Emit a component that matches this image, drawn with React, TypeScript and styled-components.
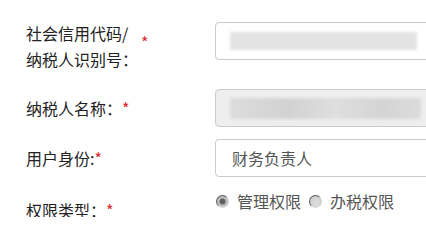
import React from 'react';
import styled, { createGlobalStyle } from 'styled-components';

const GlobalStyle = createGlobalStyle`
  html, body {
    margin: 0;
    padding: 0;
    background: #fff;
    overflow: hidden;
  }
  body {
    font-family: "Noto Sans CJK SC", "Noto Sans", sans-serif;
    font-size: 16px;
  }
`;

const Form = styled.div`
  display: flex;
  flex-direction: column;
  box-sizing: border-box;
  width: 426px;
  height: 217px;
  overflow: hidden;
  padding: 20px 0 0 26px;
`;

const Row = styled.div<{ $height: number; $gap: number; $align?: string }>`
  display: flex;
  align-items: ${(p) => p.$align ?? 'center'};
  flex-shrink: 0;
  height: ${(p) => p.$height}px;
  margin-bottom: ${(p) => p.$gap}px;
`;

const Label = styled.div<{ $offset?: number }>`
  display: flex;
  align-items: flex-start;
  width: 189px;
  flex-shrink: 0;
  margin-top: ${(p) => p.$offset ?? 0}px;
  color: #222;
  line-height: 26px;
`;

const LabelText = styled.span<{ $width?: number }>`
  display: block;
  width: ${(p) => (p.$width ? `${p.$width}px` : 'auto')};
`;

const Star = styled.span<{ $drop?: number }>`
  color: #e3262b;
  margin-top: ${(p) => p.$drop ?? 0}px;
`;

const Field = styled.div<{ $disabled?: boolean; $offset?: number }>`
  display: flex;
  align-items: center;
  flex-shrink: 0;
  box-sizing: border-box;
  width: 250px;
  height: 38px;
  margin-top: ${(p) => p.$offset ?? 0}px;
  padding-left: 14px;
  border: 1px solid #cbcbcb;
  border-radius: 4px;
  background: ${(p) => (p.$disabled ? '#eeeeee' : '#fff')};
  color: #555;
  font-size: 16px;
`;

const Masked = styled.span<{ $width: number; $height: number; $tone: string }>`
  display: block;
  width: ${(p) => p.$width}px;
  height: ${(p) => p.$height}px;
  background: ${(p) => p.$tone};
  filter: blur(1.5px);
`;

const FieldText = styled.span`
  padding-left: 2px;
  line-height: 26px;
`;

const Options = styled.div`
  display: flex;
  align-items: center;
  height: 26px;
  color: #555;
`;

const Option = styled.label`
  display: flex;
  align-items: center;
  gap: 8px;
  margin-right: 7px;
  line-height: 26px;
`;

const Radio = styled.span<{ $checked?: boolean }>`
  display: block;
  box-sizing: border-box;
  width: 13px;
  height: 13px;
  margin-left: 1px;
  border-radius: 50%;
  border: 1px solid;
  border-color: #5a5a5a #cfcfcf #e0e0e0 #5a5a5a;
  background: ${(p) =>
    p.$checked
      ? 'radial-gradient(circle at 50% 50%, #555 0, #666 2.6px, #b4b4b4 3.4px, #dadada 100%)'
      : 'radial-gradient(circle at 60% 60%, #dedede 0, #c9c9c9 100%)'};
`;

export default function App() {
  return (
    <>
      <GlobalStyle />
      <Form>
        <Row $height={52} $gap={17} $align="flex-start">
          <Label>
            <LabelText $width={115}>
              社会信用代码/
              <br />
              纳税人识别号：
            </LabelText>
            <Star $drop={9}>*</Star>
          </Label>
          <Field $offset={2}>
            <Masked $width={187} $height={18} $tone="#e3e3e3" />
          </Field>
        </Row>
        <Row $height={38} $gap={12}>
          <Label>
            <LabelText>纳税人名称：</LabelText>
            <Star>*</Star>
          </Label>
          <Field $disabled>
            <Masked
              $width={191}
              $height={21}
              $tone="linear-gradient(90deg, #dcdcdc, #d2d2d2 30%, #dedede 55%, #d4d4d4 80%, #dcdcdc)"
            />
          </Field>
        </Row>
        <Row $height={38} $gap={11}>
          <Label>
            <LabelText>用户身份:</LabelText>
            <Star>*</Star>
          </Label>
          <Field>
            <FieldText>财务负责人</FieldText>
          </Field>
        </Row>
        <Row $height={36} $gap={0} $align="flex-start">
          <Label $offset={9}>
            <LabelText>权限类型：</LabelText>
            <Star>*</Star>
          </Label>
          <Options>
            <Option>
              <Radio $checked />
              管理权限
            </Option>
            <Option>
              <Radio />
              办税权限
            </Option>
          </Options>
        </Row>
      </Form>
    </>
  );
}
